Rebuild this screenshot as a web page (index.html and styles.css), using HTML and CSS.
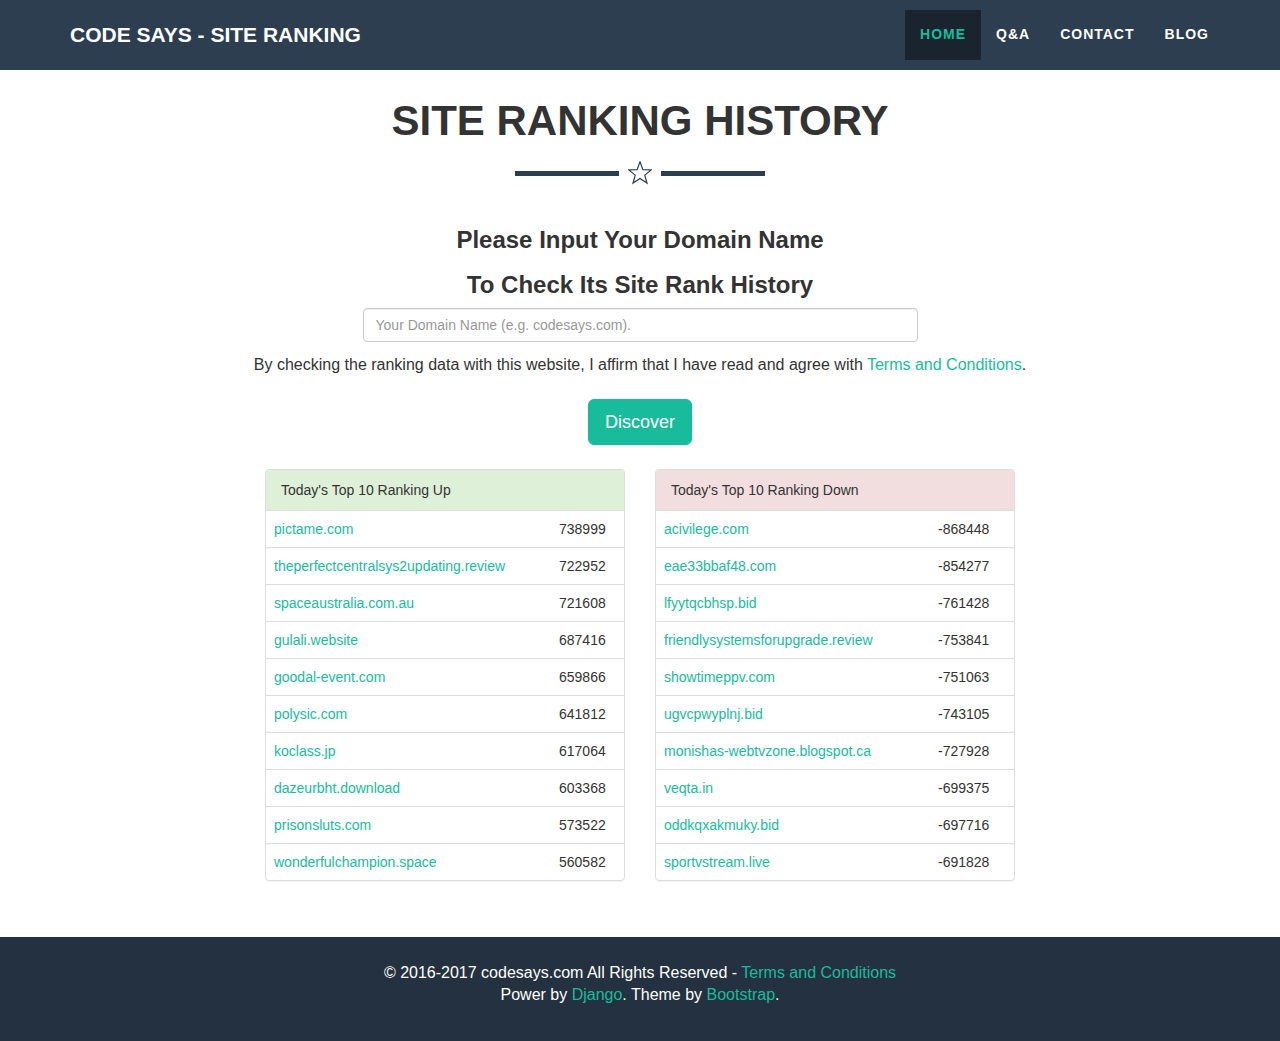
FILE: index.html
```html
<!DOCTYPE html>
<html lang="en">
<head>
<meta charset="utf-8">
<title>Code Says - Site Ranking</title>
<link rel="stylesheet" href="styles.css">
</head>
<body>
<nav class="navbar">
  <div class="nav-inner">
    <a class="brand" href="#">CODE SAYS - SITE RANKING</a>
    <ul class="nav-links">
      <li><a class="active" href="#">Home</a></li>
      <li><a href="#">Q&amp;A</a></li>
      <li><a href="#">Contact</a></li>
      <li><a href="#">Blog</a></li>
    </ul>
  </div>
</nav>

<section class="main">
  <h2 class="title">SITE RANKING HISTORY</h2>
  <div class="divider">
    <span class="line"></span>
    <svg class="star" width="24" height="24" viewBox="0 0 24 24"><polygon points="12,0.8 14.94,8.6 23.3,8.9 16.76,14.1 19.0,22.1 12,17.5 5.0,22.1 7.24,14.1 0.7,8.9 9.06,8.6" fill="none" stroke="#2c3e50" stroke-width="1.2" stroke-linejoin="miter"/></svg>
    <span class="line"></span>
  </div>
  <h3 class="sub">Please Input Your Domain Name</h3>
  <h3 class="sub">To Check Its Site Rank History</h3>
  <input class="domain" type="text" placeholder="Your Domain Name (e.g. codesays.com).">
  <p class="agree">By checking the ranking data with this website, I affirm that I have read and agree with <a href="#">Terms and Conditions</a>.</p>
  <button class="btn">Discover</button>

  <div class="panels">
    <div class="panel">
      <div class="panel-heading up">Today's Top 10 Ranking Up</div>
      <table class="rank">
        <colgroup><col class="c-name-up"><col class="c-num-up"></colgroup>
        <tbody>
          <tr><td><a href="#">pictame.com</a></td><td>738999</td></tr>
          <tr><td><a href="#">theperfectcentralsys2updating.review</a></td><td>722952</td></tr>
          <tr><td><a href="#">spaceaustralia.com.au</a></td><td>721608</td></tr>
          <tr><td><a href="#">gulali.website</a></td><td>687416</td></tr>
          <tr><td><a href="#">goodal-event.com</a></td><td>659866</td></tr>
          <tr><td><a href="#">polysic.com</a></td><td>641812</td></tr>
          <tr><td><a href="#">koclass.jp</a></td><td>617064</td></tr>
          <tr><td><a href="#">dazeurbht.download</a></td><td>603368</td></tr>
          <tr><td><a href="#">prisonsluts.com</a></td><td>573522</td></tr>
          <tr><td><a href="#">wonderfulchampion.space</a></td><td>560582</td></tr>
        </tbody>
      </table>
    </div>
    <div class="panel">
      <div class="panel-heading down">Today's Top 10 Ranking Down</div>
      <table class="rank">
        <colgroup><col class="c-name-down"><col class="c-num-down"></colgroup>
        <tbody>
          <tr><td><a href="#">acivilege.com</a></td><td>-868448</td></tr>
          <tr><td><a href="#">eae33bbaf48.com</a></td><td>-854277</td></tr>
          <tr><td><a href="#">lfyytqcbhsp.bid</a></td><td>-761428</td></tr>
          <tr><td><a href="#">friendlysystemsforupgrade.review</a></td><td>-753841</td></tr>
          <tr><td><a href="#">showtimeppv.com</a></td><td>-751063</td></tr>
          <tr><td><a href="#">ugvcpwyplnj.bid</a></td><td>-743105</td></tr>
          <tr><td><a href="#">monishas-webtvzone.blogspot.ca</a></td><td>-727928</td></tr>
          <tr><td><a href="#">veqta.in</a></td><td>-699375</td></tr>
          <tr><td><a href="#">oddkqxakmuky.bid</a></td><td>-697716</td></tr>
          <tr><td><a href="#">sportvstream.live</a></td><td>-691828</td></tr>
        </tbody>
      </table>
    </div>
  </div>
</section>

<footer class="footer">
  <div>© 2016-2017 codesays.com All Rights Reserved - <a href="#">Terms and Conditions</a></div>
  <div>Power by <a href="#">Django</a>. Theme by <a href="#">Bootstrap</a>.</div>
</footer>
</body>
</html>
```

FILE: styles.css
```css
* { box-sizing: border-box; }
html, body { margin: 0; padding: 0; }
body {
  font-family: "Liberation Sans", Arial, Helvetica, sans-serif;
  font-size: 16px;
  color: #333;
  background: #fff;
}
a { color: #18bc9c; text-decoration: none; }

.navbar {
  background: #2c3e50;
  height: 70px;
}
.nav-inner {
  width: 1140px;
  margin: 0 auto;
  height: 70px;
  display: flex;
  align-items: center;
  justify-content: space-between;
}
.brand {
  color: #fff;
  font-weight: bold;
  font-size: 21px;
  line-height: 30px;
}
.nav-links {
  list-style: none;
  margin: 0 -14px 0 0;
  padding: 0;
  display: flex;
}
.nav-links a {
  display: block;
  padding: 14px 15px 16px;
  line-height: 20px;
  font-size: 14px;
  font-weight: bold;
  letter-spacing: 1px;
  text-transform: uppercase;
  color: #fff;
}
.nav-links a.active {
  background: #1a242f;
  color: #18bc9c;
}

.main {
  padding: 28px 0 56px;
  text-align: center;
}
.title {
  margin: 0;
  font-size: 42px;
  line-height: 1.1;
  font-weight: bold;
  color: #333;
}
.divider {
  margin: 17px auto 42px;
  height: 24px;
  display: flex;
  justify-content: center;
  align-items: center;
  gap: 9px;
}
.divider .line {
  width: 104px;
  height: 5px;
  background: #2c3e50;
}
.divider .star { display: block; }

.sub {
  margin: 20px 0 10px;
  font-size: 24px;
  line-height: 1.1;
  font-weight: bold;
  color: #333;
}
.sub + .sub { margin-top: 18px; }
.domain {
  display: block;
  width: 555px;
  height: 34px;
  margin: 0 auto;
  padding: 6px 12px;
  font-family: inherit;
  font-size: 14px;
  color: #555;
  border: 1px solid #ccc;
  border-radius: 4px;
  box-shadow: inset 0 1px 1px rgba(0,0,0,.075);
}
.domain::placeholder { color: #999; }
.agree {
  margin: 12px 0 22px;
  line-height: 1.42857;
}
.btn {
  display: inline-block;
  height: 46px;
  padding: 10px 16px;
  font-family: inherit;
  font-size: 18px;
  line-height: 24px;
  color: #fff;
  background: #18bc9c;
  border: 1px solid #18bc9c;
  border-radius: 6px;
  cursor: pointer;
}

.panels {
  width: 750px;
  margin: 24px auto 0;
  display: grid;
  grid-template-columns: 360px 360px;
  gap: 30px;
  text-align: left;
}
.panel {
  border: 1px solid #ddd;
  border-radius: 4px;
  box-shadow: 0 1px 1px rgba(0,0,0,.05);
  overflow: hidden;
  font-size: 14px;
}
.panel-heading {
  padding: 10px 15px;
  line-height: 20px;
  color: #333;
  border-bottom: 1px solid #ddd;
}
.panel-heading.up { background: #dff0d8; }
.panel-heading.down { background: #f2dede; }
.rank {
  width: 100%;
  border-collapse: collapse;
  table-layout: fixed;
}
.rank td {
  padding: 8px;
  line-height: 20px;
  border-top: 1px solid #ddd;
  white-space: nowrap;
}
.rank tr:first-child td { border-top: 0; }
.c-num-up { width: 73px; }
.c-num-down { width: 84px; }

.footer {
  background: #233140;
  color: #fff;
  text-align: center;
  padding: 25px 0 35px;
  line-height: 22px;
}
```
